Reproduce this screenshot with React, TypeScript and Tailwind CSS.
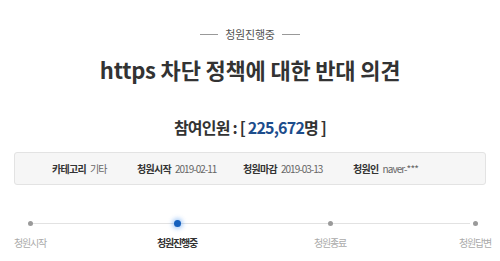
import React from "react";

const font = { fontFamily: '"Noto Sans CJK KR", "Noto Sans", sans-serif' };

function Step({ label, active, className = "" }: { label: string; active?: boolean; className?: string }) {
  return (
    <div className={"relative flex w-[32px] shrink-0 flex-col items-center " + className}>
      <div className="flex h-[10px] items-center justify-center">
        {active ? (
          <div className="h-[7px] w-[7px] rounded-full bg-[#1560bd] shadow-[0_0_4px_2px_rgba(80,150,240,0.45)]" />
        ) : (
          <div className="h-[5px] w-[5px] rounded-full bg-[#9a9a9a]" />
        )}
      </div>
      <div
        className={
          "mt-[9px] whitespace-nowrap text-[10px] leading-[12px] tracking-[-1.2px] " +
          (active ? "font-bold text-[#333]" : "text-[#aaa]")
        }
      >
        {label}
      </div>
    </div>
  );
}

export default function App() {
  return (
    <div className="h-[261px] w-[500px] overflow-hidden bg-white" style={font}>
      <div className="flex items-center justify-center gap-[7px] pt-[26px]">
        <div className="h-px w-[18px] bg-[#999]" />
        <div className="text-[11px] leading-[16px] tracking-[-0.2px] text-[#555]">청원진행중</div>
        <div className="h-px w-[18px] bg-[#999]" />
      </div>
      <h1 className="mt-[12px] text-center text-[22px] font-bold leading-[30px] tracking-[-0.2px] text-[#333]">
        https 차단 정책에 대한 반대 의견
      </h1>
      <div className="mt-[32px] text-center text-[16px] font-bold leading-[22px] tracking-[-0.8px] text-[#333]">
        참여인원 : [ <span className="text-[#1d4d8c]">225,672</span>명 ]
      </div>
      <div className="mx-[14px] mt-[14px] flex h-[33px] items-center rounded-[3px] border border-[#e3e3e3] bg-[#f6f6f6] pl-[37px]">
        <div className="flex w-[85px] items-center gap-[4px]">
          <span className="text-[10px] font-bold tracking-[-0.7px] text-[#333]">카테고리</span>
          <span className="text-[10px] tracking-[-0.9px] text-[#666]">기타</span>
        </div>
        <div className="flex w-[106px] items-center gap-[4px]">
          <span className="text-[10px] font-bold tracking-[-0.7px] text-[#333]">청원시작</span>
          <span className="text-[10px] tracking-[-1px] text-[#666]">2019-02-11</span>
        </div>
        <div className="flex w-[110px] items-center gap-[4px]">
          <span className="text-[10px] font-bold tracking-[-0.7px] text-[#333]">청원마감</span>
          <span className="text-[10px] tracking-[-1px] text-[#666]">2019-03-13</span>
        </div>
        <div className="flex items-center gap-[4px]">
          <span className="text-[10px] font-bold tracking-[-0.7px] text-[#333]">청원인</span>
          <span className="text-[10px] tracking-[-0.9px] text-[#666]">naver-***</span>
        </div>
      </div>
      <div className="relative mx-[14px] mt-[33px]">
        <div className="absolute left-[16px] right-[16px] top-[4.5px] h-px bg-[#e2e2e2]" />
        <div className="relative flex">
          <Step label="청원시작" />
          <Step label="청원진행중" active className="ml-[115px]" />
          <Step label="청원종료" className="ml-[121px]" />
          <Step label="청원답변" className="ml-[113px]" />
        </div>
      </div>
    </div>
  );
}
